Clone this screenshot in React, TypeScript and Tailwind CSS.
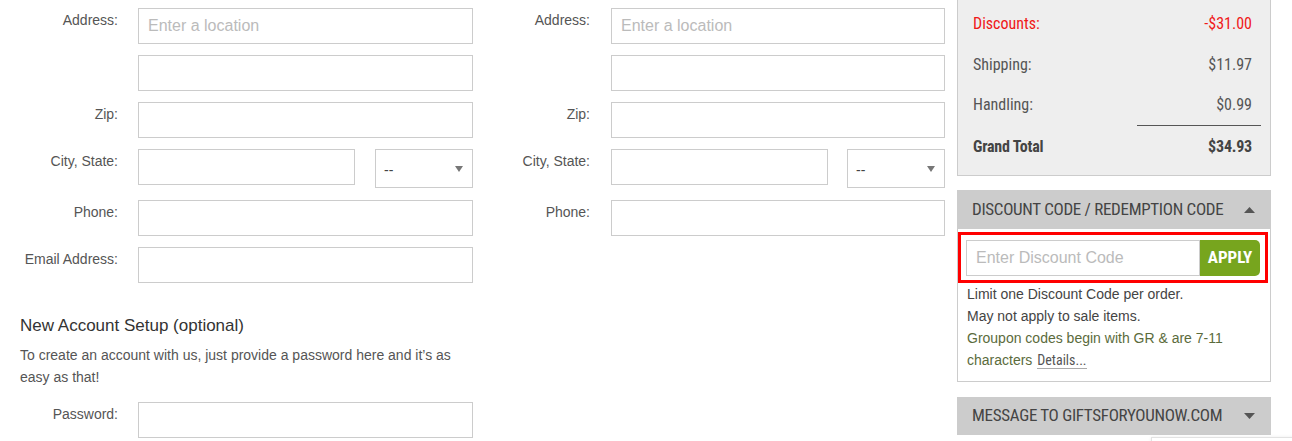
import React from 'react';

const narrow = "font-['Roboto_Condensed','DejaVu_Sans_Condensed',sans-serif]";

function TextInput({ width = 'w-[335px]', placeholder }: { width?: string; placeholder?: string }) {
  return (
    <input
      type="text"
      placeholder={placeholder}
      className={`${width} h-[36px] border border-[#ccc] bg-white pl-[9px] pr-[10px] text-[16px] text-[#333] outline-none placeholder:text-[#bbb]`}
    />
  );
}

function StateSelect() {
  return (
    <div className="flex h-[39px] w-[98px] items-center justify-between border border-[#ccc] bg-white pl-[8px] pr-[9px] text-[14px] text-[#444]">
      <span className="mt-[4px]">--</span>
      <svg width="8" height="6" viewBox="0 0 8 6">
        <path d="M0 0h8L4 6z" fill="#777" />
      </svg>
    </div>
  );
}

function Row({ label, labelWidth, gap, children }: { label?: string; labelWidth: string; gap: string; children: React.ReactNode }) {
  return (
    <div className={`flex items-start ${gap}`}>
      <div className={`${labelWidth} shrink-0 pt-[2px] text-right text-[14px] leading-5 text-[#555]`}>{label}</div>
      {children}
    </div>
  );
}

function AddressFields({ labelWidth, gap, inputWidth, cityWidth, withEmail }: {
  labelWidth: string;
  gap: string;
  inputWidth: string;
  cityWidth: string;
  withEmail?: boolean;
}) {
  return (
    <div className="flex flex-col pt-[8px]">
      <Row label="Address:" labelWidth={labelWidth} gap={gap}>
        <TextInput width={inputWidth} placeholder="Enter a location" />
      </Row>
      <div className="mt-[11px]">
        <Row labelWidth={labelWidth} gap={gap}>
          <TextInput width={inputWidth} />
        </Row>
      </div>
      <div className="mt-[11px]">
        <Row label="Zip:" labelWidth={labelWidth} gap={gap}>
          <TextInput width={inputWidth} />
        </Row>
      </div>
      <div className="mt-[11px]">
        <Row label="City, State:" labelWidth={labelWidth} gap={gap}>
          <div className={`flex ${inputWidth} justify-between`}>
            <TextInput width={cityWidth} />
            <StateSelect />
          </div>
        </Row>
      </div>
      <div className="mt-[12px]">
        <Row label="Phone:" labelWidth={labelWidth} gap={gap}>
          <TextInput width={inputWidth} />
        </Row>
      </div>
      {withEmail && (
        <div className="mt-[11px]">
          <Row label="Email Address:" labelWidth={labelWidth} gap={gap}>
            <TextInput width={inputWidth} />
          </Row>
        </div>
      )}
    </div>
  );
}

function SummaryLine({ label, value, height, className }: { label: string; value: string; height: string; className?: string }) {
  return (
    <div className={`flex ${height} items-start justify-between pr-[18px] text-[16px] leading-6 ${className ?? 'text-[#555]'}`}>
      <span>{label}</span>
      <span>{value}</span>
    </div>
  );
}

function Caret({ up }: { up?: boolean }) {
  return (
    <svg width="11" height="6" viewBox="0 0 11 6" className="shrink-0">
      <path d={up ? 'M0 6h11L5.5 0z' : 'M0 0h11L5.5 6z'} fill="#555" />
    </svg>
  );
}

export default function App() {
  return (
    <div className="relative flex h-[441px] w-[1292px] overflow-hidden bg-white font-['Liberation_Sans',Arial,sans-serif]">
      {/* Billing column */}
      <div className="flex w-[473px] shrink-0 flex-col">
        <AddressFields labelWidth="w-[118px]" gap="gap-[20px]" inputWidth="w-[335px]" cityWidth="w-[217px]" withEmail />

        <div className="mt-[31px] pl-[20px]">
          <h2 className="text-[17px] leading-6 text-[#333]">New Account Setup (optional)</h2>
          <p className="mt-[6px] w-[450px] text-[14px] leading-[22px] text-[#555]">
            To create an account with us, just provide a password here and it’s as easy as that!
          </p>
        </div>
        <div className="mt-[14px]">
          <Row label="Password:" labelWidth="w-[118px]" gap="gap-[20px]">
            <TextInput width="w-[335px]" />
          </Row>
        </div>
      </div>

      {/* Shipping column */}
      <div className="flex w-[472px] shrink-0 flex-col">
        <AddressFields labelWidth="w-[117px]" gap="gap-[21px]" inputWidth="w-[334px]" cityWidth="w-[217px]" />
      </div>

      {/* Order sidebar */}
      <div className={`ml-[12px] flex w-[314px] shrink-0 flex-col ${narrow}`}>
        <div className="border-x border-b border-[#ccc] bg-[#eee] pl-[15px] pt-[12px] pb-[16px]">
          <SummaryLine label="Discounts:" value="-$31.00" height="h-[41px]" className="text-[#f01818]" />
          <SummaryLine label="Shipping:" value="$11.97" height="h-[40px]" />
          <SummaryLine label="Handling:" value="$0.99" height="h-[32px]" />
          <div className="ml-auto mr-[9px] h-px w-[124px] bg-[#555]" />
          <div className="mt-[9px] flex justify-between pr-[18px] text-[16px] leading-6 font-bold tracking-[-0.2px] text-[#444]">
            <span>Grand Total</span>
            <span>$34.93</span>
          </div>
        </div>

        <div className="mt-[14px] flex h-[39px] items-center justify-between bg-[#ccc] pl-[15px] pr-[16px] text-[17px] tracking-[-0.3px] text-[#444]">
          <span className="whitespace-nowrap">DISCOUNT CODE / REDEMPTION CODE</span>
          <Caret up />
        </div>
        <div className="border-x border-b border-[#ccc] pb-[10px]">
          <div className="mt-[3px] mr-[2px] flex border-[3px] border-[#f00] px-[5px] pt-[5px] pb-[4px]">
            <input
              type="text"
              placeholder="Enter Discount Code"
              className="h-[36px] w-[234px] border border-[#ccc] bg-white px-[9px] font-['Liberation_Sans',Arial,sans-serif] text-[16px] outline-none placeholder:text-[#bbb]"
            />
            <button className="h-[36px] flex-1 rounded-r-[5px] bg-[#77a51e] text-[17px] font-bold text-white">APPLY</button>
          </div>
          <div className="pl-[9px] font-['Liberation_Sans',Arial,sans-serif] text-[14px] leading-[22px] text-[#444]">
            <p>Limit one Discount Code per order.</p>
            <p>May not apply to sale items.</p>
            <p className="text-[#5b6b3c]">
              Groupon codes begin with GR &amp; are 7-11 characters{' '}
              <span className={`${narrow} ml-[1px] inline-block border-b border-[#aaa] text-[14px] leading-4 text-[#555]`}>Details...</span>
            </p>
          </div>
        </div>

        <div className="mt-[15px] flex h-[38px] items-center justify-between bg-[#ccc] pl-[15px] pr-[16px] text-[17px] tracking-[-0.3px] text-[#444]">
          <span className="whitespace-nowrap">MESSAGE TO GIFTSFORYOUNOW.COM</span>
          <Caret />
        </div>
      </div>

      {/* corner widget peeking in at the bottom */}
      <div className="absolute left-[1151px] top-[437px] h-[20px] w-[160px] border-t border-l border-[#e2e2e2] bg-white shadow-[0_0_3px_rgba(0,0,0,0.08)]" />
    </div>
  );
}
